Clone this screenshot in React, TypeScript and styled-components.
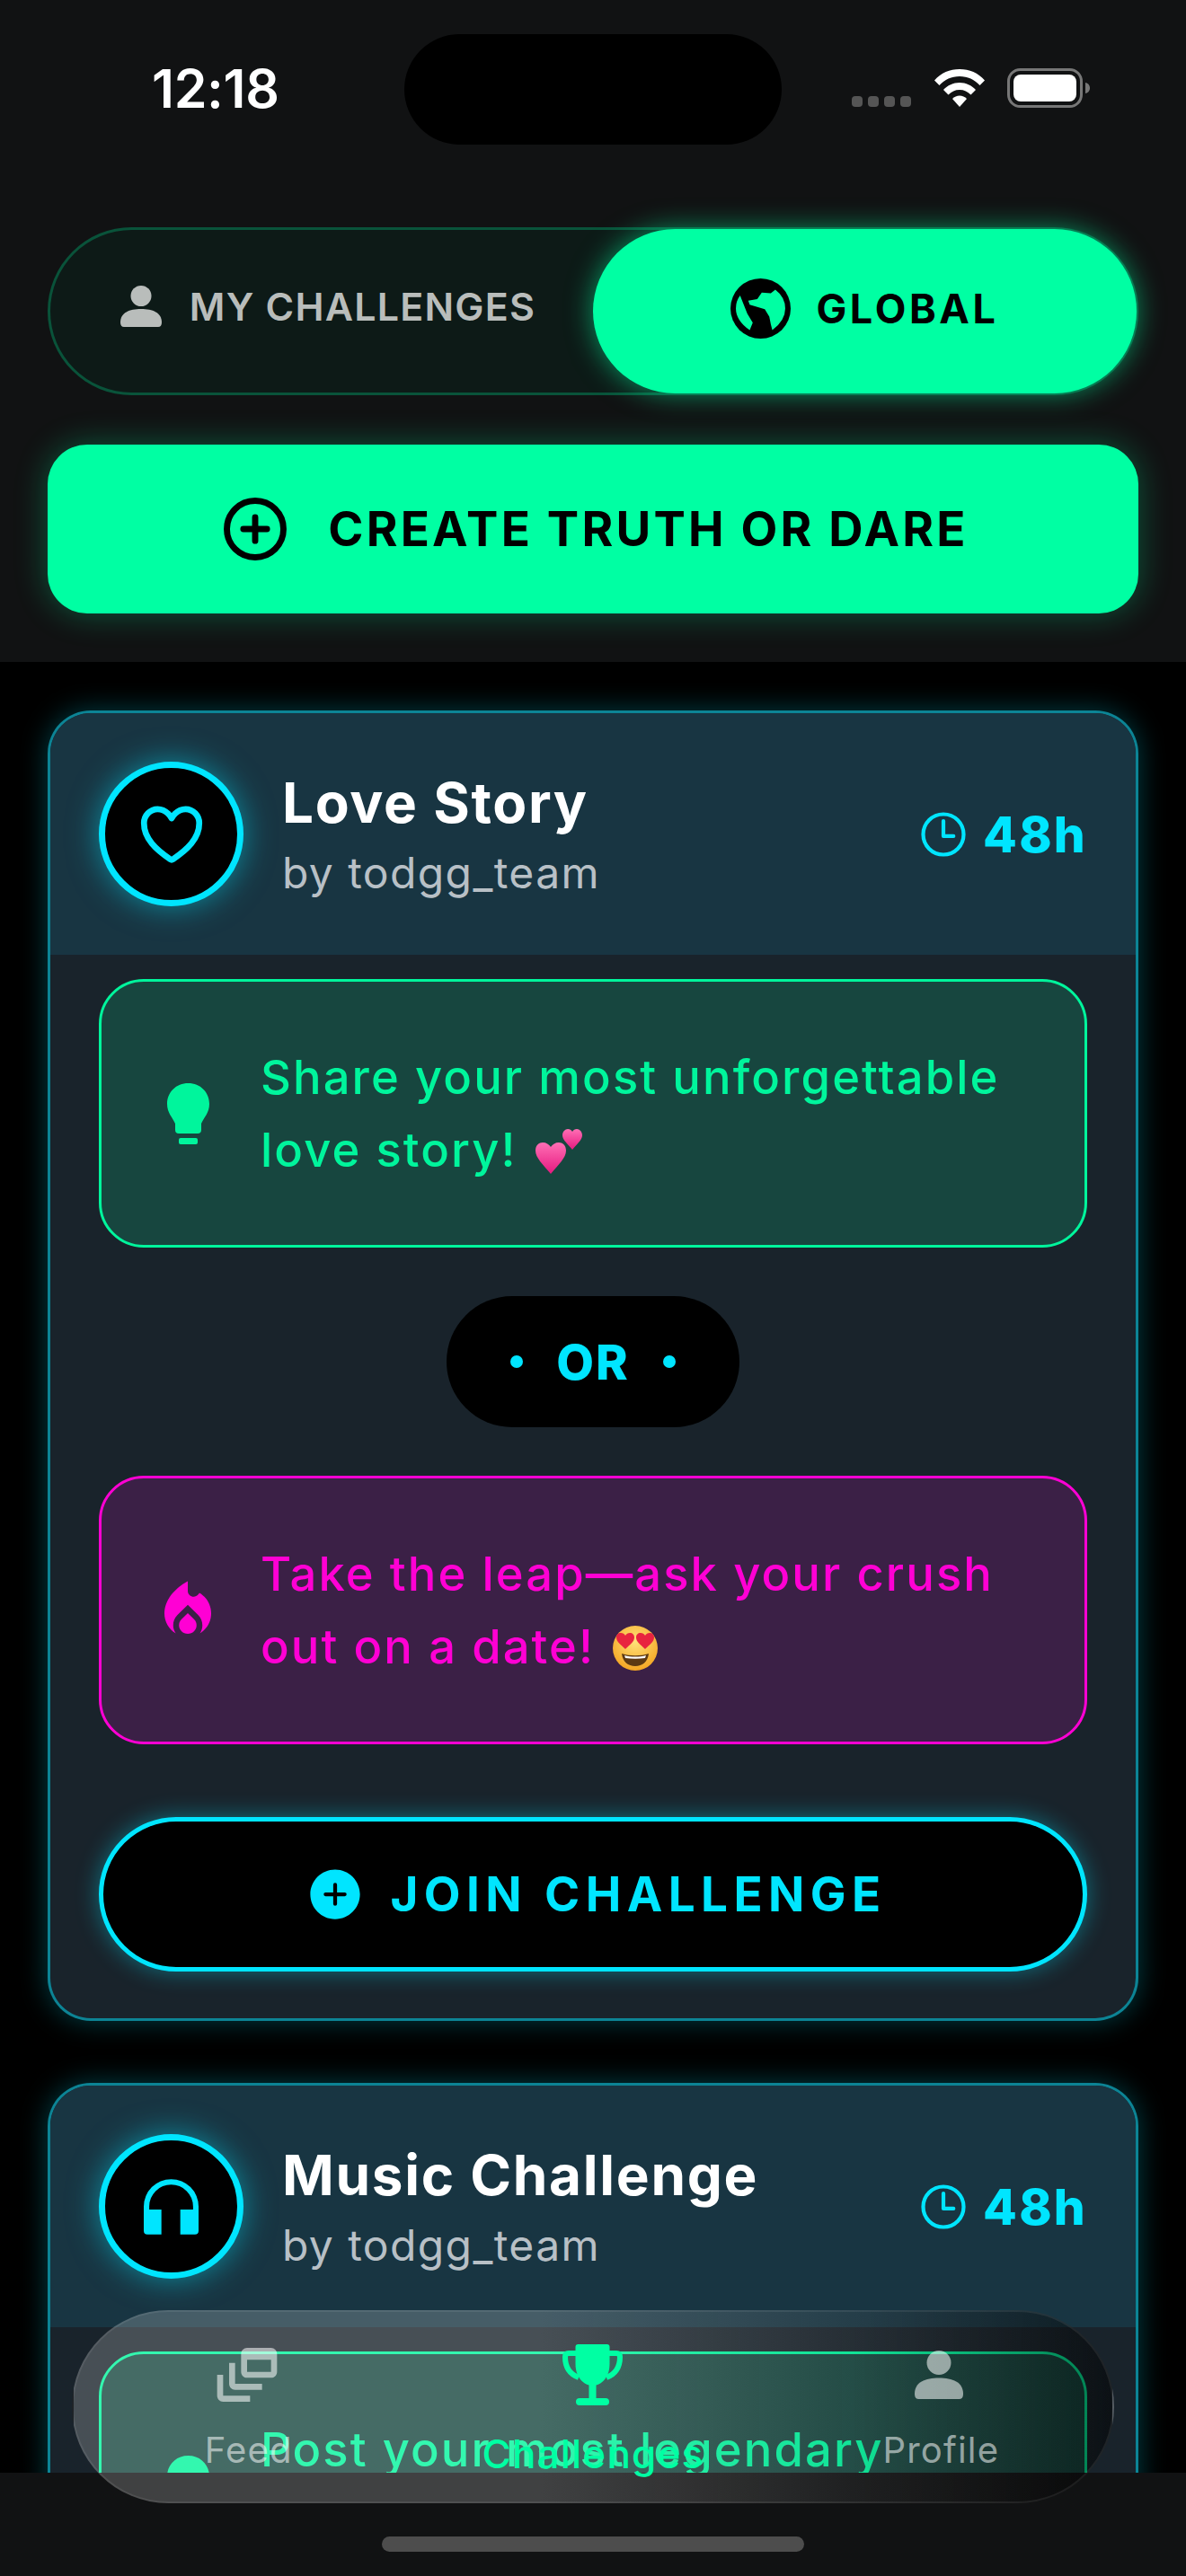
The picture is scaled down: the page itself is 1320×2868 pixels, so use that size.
import React from "react";
import styled, { createGlobalStyle } from "styled-components";
import { IoAddCircleOutline, IoAddCircle, IoHeartOutline, IoTimeOutline } from "react-icons/io5";
import { MdLocalFireDepartment, MdDynamicFeed } from "react-icons/md";

const GREEN = "#00ffa3";
const CYAN = "#00e5ff";
const MAGENTA = "#ff00d4";

const Global = createGlobalStyle`
  html, body { margin: 0; padding: 0; background: #000; }
  body { font-family: Inter, "Noto Sans", sans-serif; }
`;

const Screen = styled.div`
  position: relative;
  width: 1320px;
  height: 2868px;
  display: flex;
  flex-direction: column;
  overflow: hidden;
  background: #000;
`;

const Header = styled.header`
  flex: none;
  height: 737px;
  box-sizing: border-box;
  padding: 0 53px;
  background: #111213;
  display: flex;
  flex-direction: column;
`;

const StatusBar = styled.div`
  flex: none;
  display: grid;
  grid-template-columns: 1fr 420px 1fr;
  height: 123px;
  margin: 38px -53px 92px;
`;

const Time = styled.div`
  padding: 27px 0 0 169px;
  color: #fff;
  font-size: 59px;
  font-weight: 600;
  line-height: 68px;
  letter-spacing: -0.3px;
`;

const Island = styled.div`
  background: #000;
  border-radius: 62px;
`;

const StatusIcons = styled.div`
  display: flex;
  align-items: flex-start;
  padding: 38px 0 0 78px;
`;

const SignalDots = styled.div`
  display: flex;
  gap: 6px;
  margin: 31px 26px 0 0;
`;

const SignalDot = styled.span`
  width: 12px;
  height: 12px;
  border-radius: 4px;
  background: #555;
`;

const Toggle = styled.div`
  position: relative;
  flex: none;
  height: 187px;
  box-sizing: border-box;
  display: grid;
  grid-template-columns: 1fr 1fr;
  border: 3px solid rgba(0, 255, 163, 0.25);
  border-radius: 94px;
  background: #0d1a17;
`;

const ToggleTab = styled.div<{ $active?: boolean }>`
  display: flex;
  align-items: center;
  justify-content: center;
  box-sizing: border-box;
  gap: ${(p) => (p.$active ? 28 : 31)}px;
  margin: ${(p) => (p.$active ? "-1px -1px -1px 0" : "0")};
  padding: ${(p) => (p.$active ? "0 0 6px 0" : "0 0 12px 14px")};
  border-radius: 94px;
  font-size: ${(p) => (p.$active ? 45 : 43)}px;
  font-weight: ${(p) => (p.$active ? 700 : 600)};
  letter-spacing: ${(p) => (p.$active ? 3.6 : 1.2)}px;
  color: ${(p) => (p.$active ? "#000" : "#b9bdbb")};
  background: ${(p) => (p.$active ? GREEN : "transparent")};
  box-shadow: ${(p) => (p.$active ? `0 0 30px rgba(0, 255, 163, 0.55)` : "none")};
`;

const CreateButton = styled.div`
  flex: none;
  height: 188px;
  margin-top: 55px;
  display: flex;
  align-items: center;
  justify-content: center;
  gap: 39px;
  border-radius: 44px;
  background: ${GREEN};
  box-shadow: 0 0 36px rgba(0, 255, 163, 0.3);
  color: #000;
  font-size: 53px;
  font-weight: 700;
  letter-spacing: 3.2px;

  svg * {
    stroke-width: 42px;
  }
`;

const Feed = styled.main`
  flex: 1;
  min-height: 0;
  overflow: hidden;
  box-sizing: border-box;
  padding: 54px 53px 0;
  display: flex;
  flex-direction: column;
  gap: 69px;
`;

const Card = styled.article`
  flex: none;
  border: 3px solid rgba(0, 229, 255, 0.5);
  border-radius: 48px;
  background: #19232b;
  box-shadow: 0 0 30px rgba(0, 229, 255, 0.28);
  overflow: hidden;
`;

const CardHead = styled.div`
  height: 269px;
  box-sizing: border-box;
  padding: 54px 54px 0;
  display: flex;
  align-items: flex-start;
  background: #183542;
`;

const Avatar = styled.div`
  flex: none;
  width: 161px;
  height: 161px;
  box-sizing: border-box;
  border: 7px solid ${CYAN};
  border-radius: 50%;
  background: #000;
  box-shadow: 0 0 34px rgba(0, 229, 255, 0.5);
  color: ${CYAN};
  display: flex;
  align-items: center;
  justify-content: center;
  margin-right: 43px;

  svg.outline * {
    stroke-width: 42px;
  }
`;

const HeadText = styled.div`
  flex: 1;
  min-width: 0;
`;

const Title = styled.div`
  color: #fff;
  font-size: 62px;
  font-weight: 700;
  line-height: 68px;
  letter-spacing: 1.7px;
  margin-top: 12px;
`;

const Author = styled.div`
  color: #b8c0c6;
  font-size: 48px;
  font-weight: 400;
  line-height: 56px;
  letter-spacing: 1.4px;
  margin-top: 16px;
`;

const Timer = styled.div`
  display: flex;
  align-items: center;
  gap: 14px;
  height: 161px;
  color: ${CYAN};
  font-size: 55px;
  font-weight: 800;
  letter-spacing: 2.2px;

  svg * {
    stroke-width: 36px;
  }
`;

const CardBody = styled.div`
  padding: 27px 54px 52px;
`;

const Prompt = styled.div<{ $color: string; $bg: string }>`
  height: 299px;
  box-sizing: border-box;
  display: flex;
  align-items: center;
  padding: 0 30px 0 69px;
  gap: 54px;
  border: 3px solid ${(p) => p.$color};
  border-radius: 50px;
  background: ${(p) => p.$bg};
  color: ${(p) => p.$color};
`;

const PromptIcon = styled.div`
  flex: none;
  width: 54px;
  display: flex;
  justify-content: center;

  svg {
    flex: none;
  }
`;

const PromptText = styled.div`
  font-size: 52.5px;
  font-weight: 500;
  line-height: 81px;
  letter-spacing: 2.1px;
`;

const Emoji = styled.svg`
  display: inline-block;
  vertical-align: -8px;
  margin-left: 4px;
`;

const OrRow = styled.div`
  display: flex;
  justify-content: center;
  margin: 54px 0;
`;

const OrPill = styled.div`
  width: 326px;
  height: 146px;
  display: flex;
  align-items: center;
  justify-content: center;
  gap: 37px;
  border-radius: 73px;
  background: #000;
  color: ${CYAN};
  font-size: 54px;
  font-weight: 800;
  letter-spacing: 2px;
`;

const OrDot = styled.span`
  width: 14px;
  height: 14px;
  border-radius: 50%;
  background: ${CYAN};
`;

const JoinButton = styled.div`
  height: 172px;
  margin-top: 81px;
  padding-left: 6px;
  box-sizing: border-box;
  display: flex;
  align-items: center;
  justify-content: center;
  gap: 27px;
  border: 5px solid ${CYAN};
  border-radius: 86px;
  background: #000;
  box-shadow: 0 0 26px rgba(0, 229, 255, 0.4);
  color: ${CYAN};
  font-size: 53px;
  font-weight: 700;
  letter-spacing: 6.4px;
`;

const BottomBar = styled.div`
  flex: none;
  height: 115px;
  background: #111213;
  display: flex;
  justify-content: center;
`;

const HomeIndicator = styled.div`
  width: 470px;
  height: 17px;
  margin-top: 71px;
  border-radius: 9px;
  background: #4d4d4d;
`;

const NavPill = styled.nav`
  position: absolute;
  left: 80px;
  top: 2572px;
  width: 1160px;
  height: 215px;
  box-sizing: border-box;
  display: grid;
  grid-template-columns: repeat(3, 1fr);
  padding-top: 34px;
  border: 2px solid rgba(255, 255, 255, 0.08);
  border-radius: 108px;
  background: linear-gradient(90deg, rgba(255, 255, 255, 0.2) 0%, rgba(255, 255, 255, 0.2) 45%, rgba(120, 120, 120, 0.14) 75%, rgba(0, 0, 0, 0.5) 100%);
`;

const NavItem = styled.div<{ $active?: boolean }>`
  display: flex;
  flex-direction: column;
  align-items: center;
  color: ${(p) => (p.$active ? GREEN : "rgba(255, 255, 255, 0.55)")};
  font-size: ${(p) => (p.$active ? 44 : 40)}px;
  font-weight: ${(p) => (p.$active ? 500 : 400)};
  letter-spacing: 1.2px;
`;

const NavIcon = styled.div`
  height: 72px;
  display: flex;
  align-items: center;
  justify-content: center;
`;

const NavLabel = styled.div<{ $active?: boolean }>`
  line-height: 50px;
  margin-top: ${(p) => (p.$active ? 27 : 23)}px;
  margin-left: ${(p) => (p.$active ? 0 : 4)}px;
`;

const PersonGlyph = ({ size }: { size: number }) => (
  <svg width={size} height={size} viewBox="0 0 46 46" fill="currentColor">
    <circle cx="23" cy="11.500" r="11.500" />
    <path d="M0 41C0 30 10 26 23 26S46 30 46 41Q46 46 42 46H4Q0 46 0 41Z" />
  </svg>
);

const GlobeGlyph = () => (
  <svg width="67" height="67" viewBox="0 0 200 200">
    <circle cx="100" cy="100" r="100" fill="#000" />
    <path fill={GREEN} d="M104 47L134 49L149 37Q182 62 182 100Q182 140 139 172L134 152L129 127L114 102L64 87L59 74L89 69Z" />
    <path fill={GREEN} d="M32 57L56 117L74 147L64 172Q18 140 18 100Q18 75 32 57Z" />
  </svg>
);

const BulbGlyph = () => (
  <svg width="47" height="68" viewBox="0 0 47 68" fill="currentColor">
    <path d="M23.500 0C10 0 0 10 0 23C0 33 6 38 9 45V52Q9 56 13 56H34Q38 56 38 52V45C41 38 47 33 47 23C47 10 37 0 23.500 0Z" />
    <rect x="13" y="61" width="21" height="7" rx="2" />
  </svg>
);

const HeadsetGlyph = () => (
  <svg width="61" height="62" viewBox="62 52 180 182" fill="currentColor">
    <path d="M62 222V142A90 90 0 0 1 242 142V222Q242 234 230 234H182V152H224V142A72 72 0 0 0 80 142V152H120V234H74Q62 234 62 222Z" />
  </svg>
);

const TrophyGlyph = () => (
  <svg width="67" height="68" viewBox="0 0 67 68" fill="currentColor">
    <path d="M14.500 3Q14.500 0 17.500 0H49.500Q52.500 0 52.500 3V22C52.500 36 44 46 33.500 46C23 46 14.500 36 14.500 22Z" />
    <path fill="none" stroke="currentColor" strokeWidth="6" d="M15 10H7Q3 10 3 14C3 27 10 34 18 37M52 10H60Q64 10 64 14C64 27 57 34 49 37" />
    <rect x="29.500" y="44" width="8" height="18" />
    <rect x="15" y="60" width="37" height="8" rx="4" />
  </svg>
);

const StatusGlyphs = () => (
  <>
    <svg width="56" height="44" viewBox="0 0 56 44" style={{ marginRight: 25 }}>
      <path fill="#fff" d="M0 13.500C7.500 5 17 1 28 1s20.500 4 28 12.500l-5.500 5.500C44.500 12.500 37 9 28 9S11.500 12.500 5.500 19Z" />
      <path fill="#fff" d="M10 24c4.500-5 11-8 18-8s13.500 3 18 8l-5.500 5.500C37 26 33 24 28 24s-9 2-12.500 5.500Z" />
      <path fill="#fff" d="M20 34c2-2 5-3.500 8-3.500s6 1.500 8 3.500l-8 9Z" />
    </svg>
    <svg width="93" height="44" viewBox="0 0 93 44">
      <rect x="1.500" y="1.500" width="81" height="41" rx="13" fill="none" stroke="#777" strokeWidth="3" />
      <rect x="7" y="7" width="70" height="30" rx="8" fill="#fff" />
      <path d="M87 16c3 .5 5 3 5 6s-2 5.500-5 6Z" fill="#777" />
    </svg>
  </>
);

const TwoHearts = () => (
  <Emoji width="52" height="50" viewBox="0 0 52 50">
    <defs>
      <linearGradient id="heartTone" x1="0" y1="0" x2="0" y2="1">
        <stop offset="0" stopColor="#ff6fb5" />
        <stop offset="1" stopColor="#e6197f" />
      </linearGradient>
    </defs>
    <path fill="url(#heartTone)" d="M17 50C8 39 0 32 0 24c0-6 4-9 8-9 4 0 7 2 9 5 2-3 5-5 9-5 4 0 8 3 8 9 0 8-8 15-17 26Z" />
    <path fill="url(#heartTone)" d="M41 23C36 17 30 12 30 7c0-4 3-7 6-7 2 0 4 1 5 3 1-2 3-3 5-3 3 0 6 3 6 7 0 5-6 10-11 16Z" />
  </Emoji>
);

const HeartEyes = () => (
  <Emoji width="50" height="50" viewBox="0 0 50 50">
    <defs>
      <radialGradient id="faceTone" cx="50%" cy="35%" r="65%">
        <stop offset="0" stopColor="#ffe27a" />
        <stop offset="1" stopColor="#f4a623" />
      </radialGradient>
    </defs>
    <circle cx="25" cy="25" r="25" fill="url(#faceTone)" />
    <path fill="#e8243f" d="M14 26c-5-5-10-8-10-13 0-3 2-5 5-5 2 0 4 1 5 3 1-2 3-3 5-3 3 0 5 2 5 5 0 5-5 8-10 13Z" />
    <path fill="#e8243f" d="M36 26c-5-5-10-8-10-13 0-3 2-5 5-5 2 0 4 1 5 3 1-2 3-3 5-3 3 0 5 2 5 5 0 5-5 8-10 13Z" />
    <path fill="#5d3a12" d="M10 31c9 3 21 3 30 0-1 9-7 14-15 14s-14-5-15-14Z" />
    <path fill="#fff" d="M13 33c7 2 17 2 24 0l-1 3c-7 1-15 1-22 0Z" />
  </Emoji>
);

type ChallengeProps = {
  icon: React.ReactNode;
  title: string;
  truth: React.ReactNode;
  dare?: React.ReactNode;
};

const Challenge = ({ icon, title, truth, dare }: ChallengeProps) => (
  <Card>
    <CardHead>
      <Avatar>{icon}</Avatar>
      <HeadText>
        <Title>{title}</Title>
        <Author>by todgg_team</Author>
      </HeadText>
      <Timer>
        <IoTimeOutline size={60} />
        48h
      </Timer>
    </CardHead>
    <CardBody>
      <Prompt $color="#00f59c" $bg="#17463f">
        <PromptIcon>
          <BulbGlyph />
        </PromptIcon>
        <PromptText>{truth}</PromptText>
      </Prompt>
      {dare && (
        <>
          <OrRow>
            <OrPill>
              <OrDot />
              OR
              <OrDot />
            </OrPill>
          </OrRow>
          <Prompt $color={MAGENTA} $bg="#3b2046">
            <PromptIcon>
              <MdLocalFireDepartment size={78} />
            </PromptIcon>
            <PromptText>{dare}</PromptText>
          </Prompt>
          <JoinButton>
            <IoAddCircle size={68} />
            JOIN CHALLENGE
          </JoinButton>
        </>
      )}
    </CardBody>
  </Card>
);

export default function App() {
  return (
    <Screen>
      <Global />
      <Header>
        <StatusBar>
          <Time>12:18</Time>
          <Island />
          <StatusIcons>
            <SignalDots>
              <SignalDot />
              <SignalDot />
              <SignalDot />
              <SignalDot />
            </SignalDots>
            <StatusGlyphs />
          </StatusIcons>
        </StatusBar>
        <Toggle>
          <ToggleTab>
            <PersonGlyph size={46} />
            MY CHALLENGES
          </ToggleTab>
          <ToggleTab $active>
            <GlobeGlyph />
            GLOBAL
          </ToggleTab>
        </Toggle>
        <CreateButton>
          <IoAddCircleOutline size={84} />
          CREATE TRUTH OR DARE
        </CreateButton>
      </Header>
      <Feed>
        <Challenge
          icon={<IoHeartOutline className="outline" size={82} />}
          title="Love Story"
          truth={
            <>
              Share your most unforgettable
              <br />
              love story! <TwoHearts />
            </>
          }
          dare={
            <>
              Take the leap—ask your crush
              <br />
              out on a date! <HeartEyes />
            </>
          }
        />
        <Challenge
          icon={<HeadsetGlyph />}
          title="Music Challenge"
          truth={
            <>
              Post your most legendary
              <br />
              cover song!
            </>
          }
        />
      </Feed>
      <BottomBar>
        <HomeIndicator />
      </BottomBar>
      <NavPill>
        <NavItem>
          <NavIcon>
            <MdDynamicFeed size={80} />
          </NavIcon>
          <NavLabel>Feed</NavLabel>
        </NavItem>
        <NavItem $active>
          <NavIcon>
            <TrophyGlyph />
          </NavIcon>
          <NavLabel $active>Challenges</NavLabel>
        </NavItem>
        <NavItem>
          <NavIcon>
            <PersonGlyph size={54} />
          </NavIcon>
          <NavLabel>Profile</NavLabel>
        </NavItem>
      </NavPill>
    </Screen>
  );
}
